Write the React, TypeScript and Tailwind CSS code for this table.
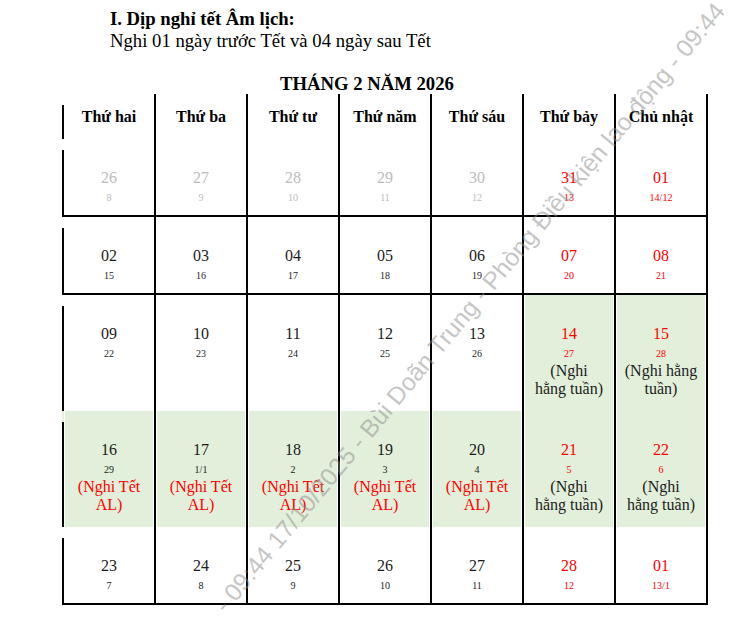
type Tone = "gray" | "black" | "red";

interface Day {
  day: string;
  lunar: string;
  tone: Tone;
  green?: boolean;
  note?: string[];
  noteRed?: boolean;
}

const HEADERS = ["Thứ hai", "Thứ ba", "Thứ tư", "Thứ năm", "Thứ sáu", "Thứ bảy", "Chủ nhật"];

const d = (day: string, lunar: string, tone: Tone, extra: Partial<Day> = {}): Day => ({
  day,
  lunar,
  tone,
  ...extra,
});

const tet = { green: true, note: ["(Nghi Tết", "AL)"], noteRed: true };

// each week: cells, row height, bottom line?, green under the left line?
const WEEKS: { cells: Day[]; tall: boolean; line: boolean; greenLeft?: boolean }[] = [
  {
    tall: false,
    line: true,
    cells: [
      d("26", "8", "gray"),
      d("27", "9", "gray"),
      d("28", "10", "gray"),
      d("29", "11", "gray"),
      d("30", "12", "gray"),
      d("31", "13", "red"),
      d("01", "14/12", "red"),
    ],
  },
  {
    tall: false,
    line: true,
    cells: [
      d("02", "15", "black"),
      d("03", "16", "black"),
      d("04", "17", "black"),
      d("05", "18", "black"),
      d("06", "19", "black"),
      d("07", "20", "red"),
      d("08", "21", "red"),
    ],
  },
  {
    tall: true,
    line: false,
    cells: [
      d("09", "22", "black"),
      d("10", "23", "black"),
      d("11", "24", "black"),
      d("12", "25", "black"),
      d("13", "26", "black"),
      d("14", "27", "red", { green: true, note: ["(Nghi", "hằng tuần)"] }),
      d("15", "28", "red", { green: true, note: ["(Nghi hằng", "tuần)"] }),
    ],
  },
  {
    tall: true,
    line: false,
    greenLeft: true,
    cells: [
      d("16", "29", "black", tet),
      d("17", "1/1", "black", tet),
      d("18", "2", "black", tet),
      d("19", "3", "black", tet),
      d("20", "4", "black", tet),
      d("21", "5", "red", { green: true, note: ["(Nghi", "hằng tuần)"] }),
      d("22", "6", "red", { green: true, note: ["(Nghi", "hằng tuần)"] }),
    ],
  },
  {
    tall: false,
    line: true,
    cells: [
      d("23", "7", "black"),
      d("24", "8", "black"),
      d("25", "9", "black"),
      d("26", "10", "black"),
      d("27", "11", "black"),
      d("28", "12", "red"),
      d("01", "13/1", "red"),
    ],
  },
];

const toneClass: Record<Tone, string> = {
  gray: "text-[#bcbcbc]",
  black: "text-[#1c1c1c]",
  red: "text-[#ff0000]",
};

function LeftLine({ green }: { green?: boolean }) {
  // the outer border breaks a little at the top of every row
  return (
    <div className={`flex w-[2px] shrink-0 flex-col ${green ? "bg-[#e2efda]" : ""}`}>
      <div className="mt-[11px] flex-1 bg-black" />
    </div>
  );
}

function DayCell({ cell }: { cell: Day }) {
  return (
    <div className="w-[92px] shrink-0 border-r-2 border-black px-px">
      <div className={`flex h-full flex-col items-center pt-[27px] ${cell.green ? "bg-[#e2efda]" : ""}`}>
        <span className={`text-[16px] leading-[24px] ${toneClass[cell.tone]}`}>{cell.day}</span>
        <span className={`text-[10px] leading-[16px] ${toneClass[cell.tone]}`}>{cell.lunar}</span>
        {cell.note && (
          <div
            className={`text-center text-[16px] leading-[18px] ${cell.noteRed ? "text-[#ff0000]" : "text-[#1c1c1c]"}`}
          >
            {cell.note.map((l) => (
              <div key={l}>{l}</div>
            ))}
          </div>
        )}
      </div>
    </div>
  );
}

export default function App() {
  return (
    <div className="relative h-[619px] w-[730px] overflow-hidden bg-white font-['Liberation_Serif',serif] text-black">
      {/* Heading */}
      <div className="pl-[110px] pt-[8px] text-[18.7px] leading-[22px]">
        <div className="font-bold">I. Dịp nghỉ tết Âm lịch:</div>
        <div>Nghi 01 ngày trước Tết và 04 ngày sau Tết</div>
      </div>
      <div className="pl-[280px] pt-[21px] text-[18.7px] font-bold leading-[22px]">THÁNG 2 NĂM 2026</div>

      {/* Calendar table */}
      <div className="ml-[62px] mt-[-1px] w-[646px]">
        <div className="flex h-[45px]">
          <LeftLine />
          {HEADERS.map((h) => (
            <div
              key={h}
              className="w-[92px] shrink-0 border-r-2 border-black pt-[13px] text-center text-[16px] font-bold leading-[20px]"
            >
              {h}
            </div>
          ))}
        </div>
        {WEEKS.map((w, i) => (
          <div
            key={i}
            className={`flex ${w.tall ? "h-[116px]" : "h-[78px]"} ${w.line ? "border-b-2 border-black" : ""}`}
          >
            <LeftLine green={w.greenLeft} />
            {w.cells.map((c, j) => (
              <DayCell key={j} cell={c} />
            ))}
          </div>
        ))}
      </div>

      {/* Watermark */}
      <div className="pointer-events-none absolute left-[470px] top-[308px] -translate-x-1/2 -translate-y-1/2 -rotate-[50.3deg] whitespace-nowrap font-['Liberation_Sans',sans-serif] text-[24.5px] leading-none text-[#8c8c8c]/50">
        - 09:44 17/10/2025 - Bùi Doãn Trung - Phòng Điều kiện lao động - 09:44
      </div>
    </div>
  );
}
